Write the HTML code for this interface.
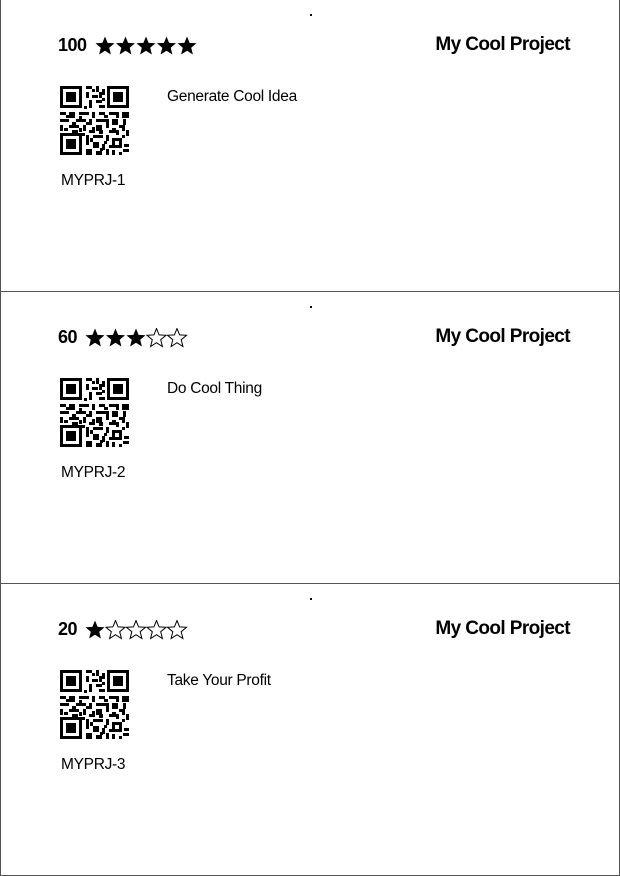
<!DOCTYPE html>
<html><head><style>
body{margin:0;width:620px;height:876px;background:#fff;font-family:"Liberation Sans",sans-serif;color:#000;overflow:hidden}
.card{position:absolute;left:0;width:618px;height:291px;border:1px solid #555;border-top:none}
.dot{position:absolute;left:309px;top:14px;width:2px;height:2px;background:#000}
.score{position:absolute;left:57px;top:35px;font-weight:bold;font-size:18px;letter-spacing:-0.5px;display:flex;align-items:center}
.stars{margin-left:8px;display:block}
.proj{position:absolute;right:49px;top:34px;font-weight:bold;font-size:19px;letter-spacing:-0.6px}
.qr{position:absolute;left:59px;top:86px}
.task{position:absolute;left:166px;top:88px;font-size:15.5px;letter-spacing:-0.3px}
.id{position:absolute;left:60px;top:172px;font-size:15.5px;letter-spacing:-0.3px}
</style></head><body>
<svg width="0" height="0" style="position:absolute"><defs>
<g id="q">
<path d="M0 0h22v22H0zM3 3v16h16V3zM6 6h10v10H6zM47 0h22v22H47zM50 3v16h16V3zM53 6h10v10H53zM0 47h22v22H0zM3 50v16h16V50zM6 53h10v10H6z" fill-rule="evenodd"/>
<path d="M26 0h6v3h-6zM36 0h3v6h-3zM42 3h3v6h-3zM26 6h3v6h-3zM32 9h6v3h-6zM29 14h3v8h-3zM36 14h6v3h-6zM39 19h6v3h-6zM0 26h6v3H0zM9 26h6v6H9zM19 26h10v3H19zM32 26h3v6h-3zM39 26h6v3h-6zM49 26h10v3H49zM62 26h7v6h-7zM3 33h6v3H3zM16 33h10v3H16zM29 33h3v6h-3zM36 33h10v3H36zM52 33h6v6h-6zM0 39h3v6H0zM9 39h10v3H9zM23 39h3v6h-3zM36 39h6v6h-6zM46 39h3v3h-3zM59 39h6v3h-6zM12 44h6v3h-6zM29 44h6v3h-6zM49 44h10v3H49zM66 44h3v6h-3zM26 49h3v10h-3zM33 49h10v3H33zM46 49h3v6h-3zM52 52h10v10H52zM55 55v4h4v-4zM33 56h6v6h-6zM42 58h3v6h-3zM26 63h6v6h-6zM36 65h6v4h-6zM46 63h3v6h-3zM63 63h6v3h-6zM59 66h3v3h-3z" fill-rule="evenodd"/>
<path d="M32 3h3v3h-3zM39 6h3v6h-3zM29 16h3v3h-3zM42 12h3v3h-3zM24 20h3v3h-3zM6 29h6v3H6zM19 30h3v6h-3zM44 29h4v3h-4zM56 29h3v3h-3zM0 33h3v3H0zM12 36h4v3h-4zM26 36h3v3h-3zM46 33h3v6h-3zM63 33h3v6h-3zM4 42h4v3H4zM19 42h3v4h-3zM32 41h3v4h-3zM52 42h4v3h-4zM62 42h3v3h-3zM22 47h3v3h-3zM39 44h4v4h-4zM56 46h3v3h-3zM30 52h3v4h-3zM44 55h3v3h-3zM62 49h3v3h-3zM64 58h5v3h-5zM49 59h3v3h-3zM40 62h3v3h-3zM52 64h3v5h-3z"/>
</g>
<path id="sf" d="M10 0.5l2.6 6.4 6.9 0.4-5.3 4.4 1.7 6.8L10 14.7l-5.9 3.8 1.7-6.8L0.5 7.3l6.9-0.4z"/>
</defs></svg>

<div class="card" style="top:0">
<div class="dot"></div>
<div class="score">100<svg class="stars" width="104" height="20"><use href="#sf" x="0"/><use href="#sf" x="20.5"/><use href="#sf" x="41"/><use href="#sf" x="61.5"/><use href="#sf" x="82"/></svg></div>
<div class="proj">My Cool Project</div>
<svg class="qr" width="69" height="69"><use href="#q"/></svg>
<div class="task">Generate Cool Idea</div>
<div class="id">MYPRJ-1</div>
</div>

<div class="card" style="top:292px">
<div class="dot"></div>
<div class="score">60<svg class="stars" width="104" height="20"><use href="#sf" x="0"/><use href="#sf" x="20.5"/><use href="#sf" x="41"/><g fill="#fff" stroke="#000" stroke-width="1"><use href="#sf" x="61.5"/><use href="#sf" x="82"/></g></svg></div>
<div class="proj">My Cool Project</div>
<svg class="qr" width="69" height="69"><use href="#q"/></svg>
<div class="task">Do Cool Thing</div>
<div class="id">MYPRJ-2</div>
</div>

<div class="card" style="top:584px">
<div class="dot"></div>
<div class="score">20<svg class="stars" width="104" height="20"><use href="#sf" x="0"/><g fill="#fff" stroke="#000" stroke-width="1"><use href="#sf" x="20.5"/><use href="#sf" x="41"/><use href="#sf" x="61.5"/><use href="#sf" x="82"/></g></svg></div>
<div class="proj">My Cool Project</div>
<svg class="qr" width="69" height="69"><use href="#q"/></svg>
<div class="task">Take Your Profit</div>
<div class="id">MYPRJ-3</div>
</div>
</body></html>
